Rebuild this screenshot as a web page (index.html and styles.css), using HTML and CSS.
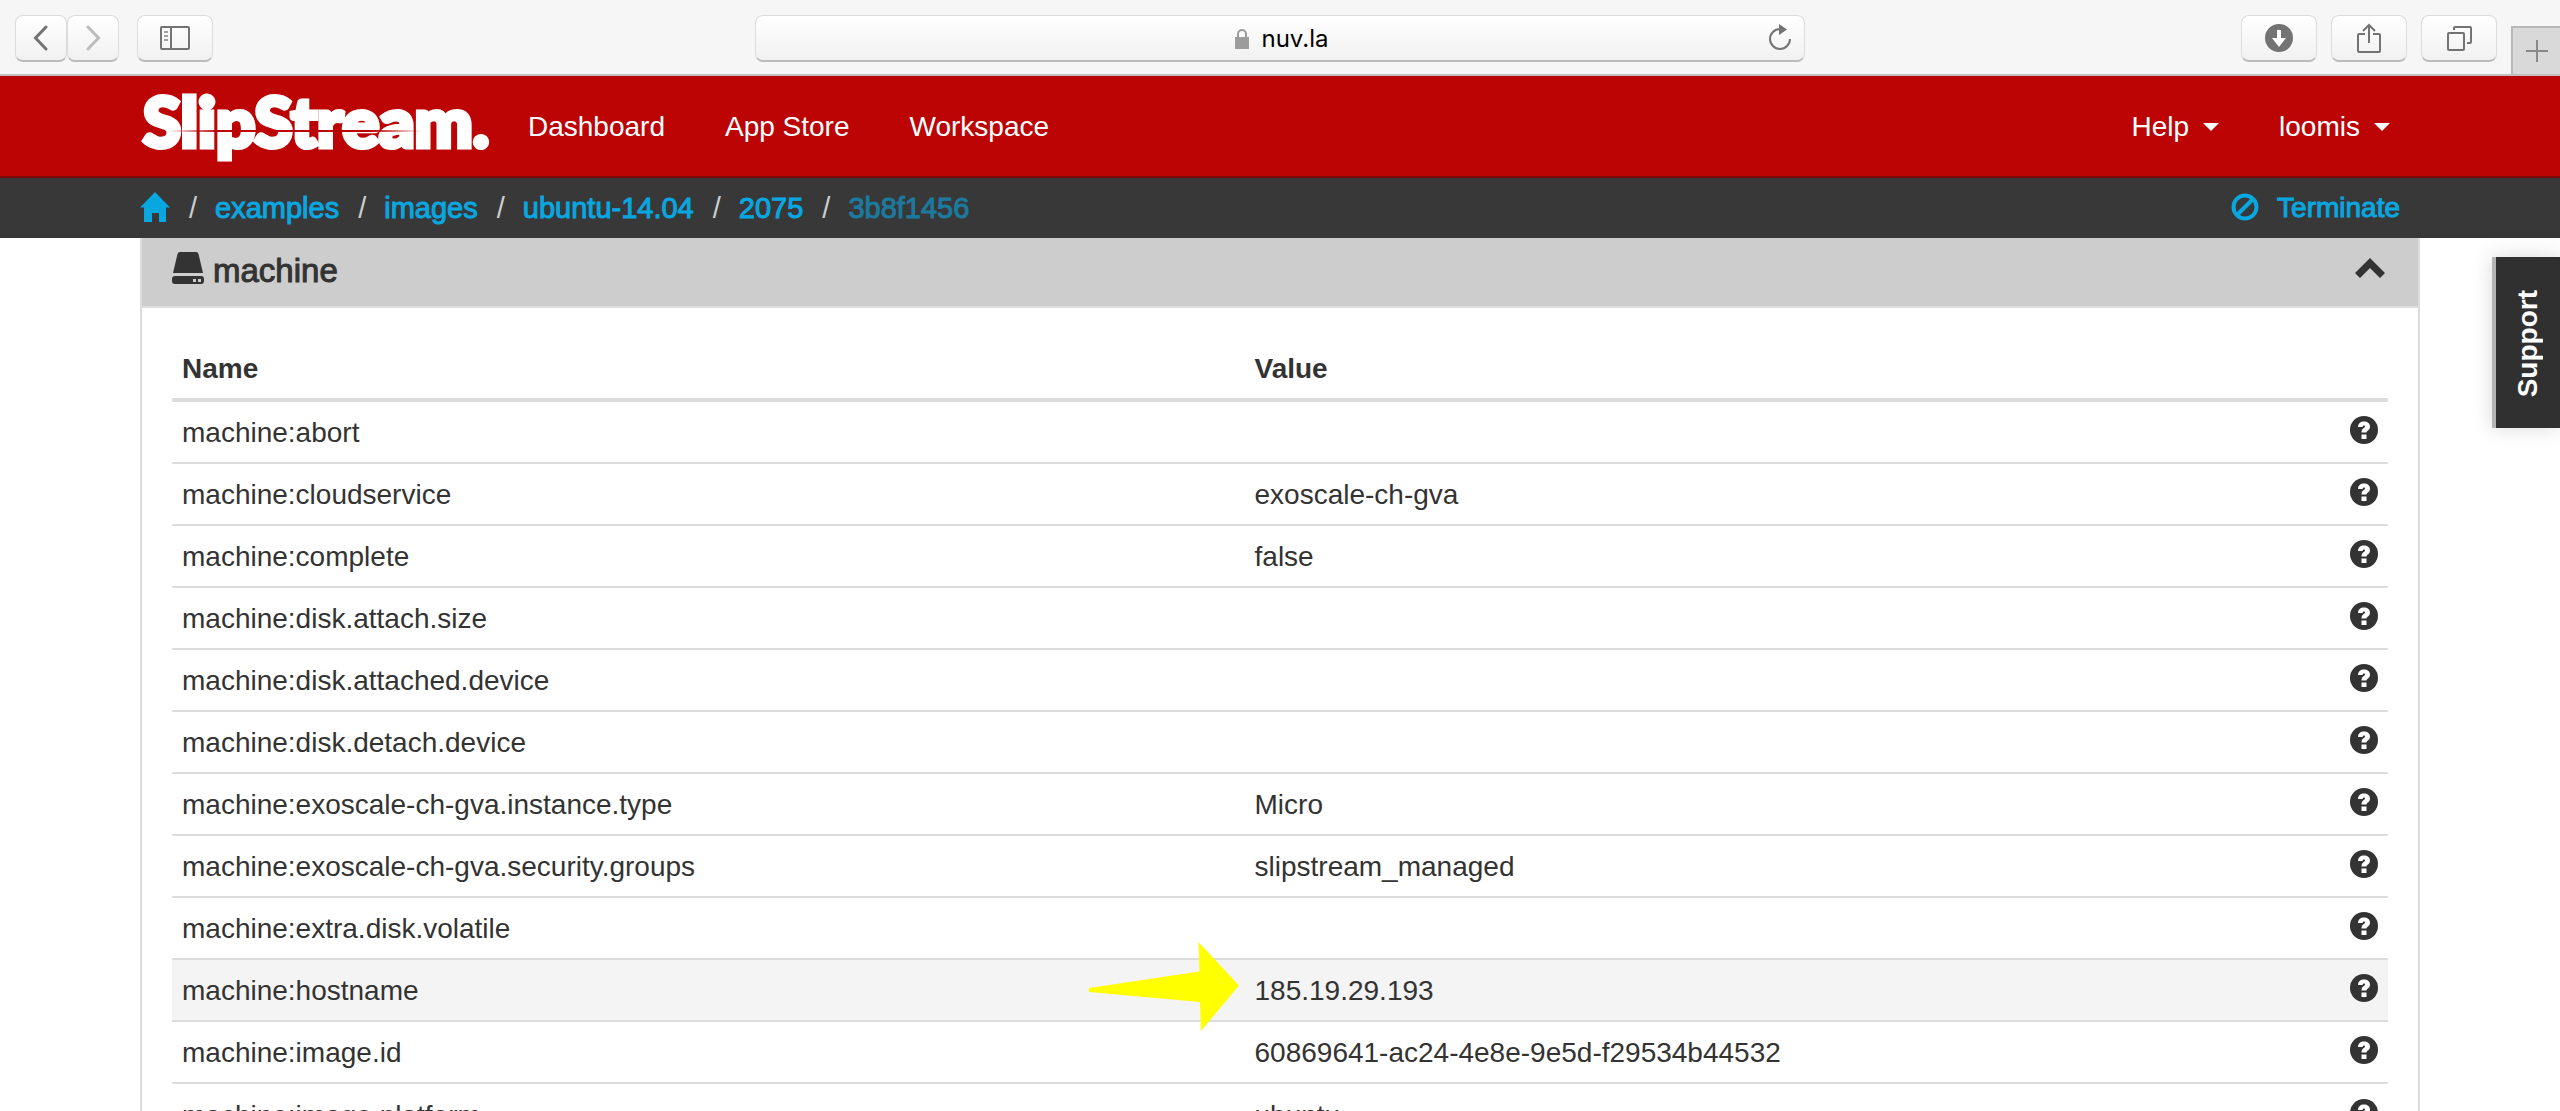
FILE: index.html
```html
<!DOCTYPE html>
<html lang="en">
<head>
<meta charset="utf-8">
<title>SlipStream</title>
<link rel="stylesheet" href="styles.css">
</head>
<body>
<svg width="0" height="0" class="defs" aria-hidden="true">
  <symbol id="help" viewBox="0 0 28 28"><circle cx="14" cy="14" r="14" fill="#333"/><path d="M8 11C8 7.500 10.500 5.500 14 5.500s6 2 6 5c0 2.500-1.300 3.600-2.700 4.600-.6.400-.8.800-.8 1.400H11.500c0-2.500.8-3.500 2.300-4.500.8-.5 1.200-.9 1.200-1.500 0-.5-.4-.9-1-.9-.8 0-1.200.5-1.300 1.400zM11.500 18.500h5V23h-5z" fill="#fff"/></symbol>
</svg>
<header class="browser">
  <div class="browser-left">
    <div class="history">
      <button class="tool tool-nav" aria-label="Back"><svg width="16" height="26" viewBox="0 0 16 26"><path d="M13 2 2.500 13 13 24" fill="none" stroke="#737373" stroke-width="3" stroke-linecap="round"/></svg></button>
      <button class="tool tool-nav" aria-label="Forward"><svg width="16" height="26" viewBox="0 0 16 26"><path d="M3 2 13.500 13 3 24" fill="none" stroke="#bdbdbd" stroke-width="3" stroke-linecap="round"/></svg></button>
    </div>
    <button class="tool" aria-label="Sidebar"><svg width="30" height="26" viewBox="0 0 30 26"><g fill="none" stroke="#737373" stroke-width="2"><rect x="1" y="2" width="28" height="22" rx="1"/><path d="M11 2v22"/></g><path d="M4 7h4M4 11h4M4 15h4" stroke="#a0a0a0" stroke-width="2"/></svg></button>
  </div>
  <div class="address">
    <svg width="14" height="22" viewBox="0 0 14 22"><path d="M3 10V6a4 4 0 0 1 8 0v4" fill="none" stroke="#9c9c9c" stroke-width="2"/><path d="M0 9h14v12H0z" fill="#9c9c9c"/></svg>
    <span>nuv.la</span>
    <button class="reload" aria-label="Reload"><svg width="24" height="28" viewBox="0 0 24 28"><path d="M12 6A10 10 0 1 0 22 16" fill="none" stroke="#737373" stroke-width="2"/><path d="M11 1l8 5.500-8 5.500z" fill="#737373"/></svg></button>
  </div>
  <div class="browser-right">
    <button class="tool" aria-label="Downloads"><svg width="28" height="28" viewBox="0 0 28 28"><circle cx="14" cy="14" r="14" fill="#737373"/><path d="M12 6h4v8h5l-7 9-7-9h5z" fill="#fff"/></svg></button>
    <button class="tool" aria-label="Share"><svg width="24" height="32" viewBox="0 0 24 32"><g fill="none" stroke="#737373" stroke-width="2"><path d="M8 12H2q-1 0-1 1v16q0 1 1 1h20q1 0 1-1V13q0-1-1-1h-6M12 21V3M6 9l6-6 6 6"/></g></svg></button>
    <button class="tool" aria-label="Tabs"><svg width="26" height="26" viewBox="0 0 26 26"><g fill="none" stroke="#737373" stroke-width="2"><rect x="2" y="8" width="16" height="17" rx="1"/><path d="M8 5V3q0-1 1-1h15q1 0 1 1v14q0 1-1 1h-3"/></g></svg></button>
    <button class="new-tab" aria-label="New tab"><svg width="22" height="22" viewBox="0 0 22 22"><path d="M11 0v22M0 11h22" stroke="#8a8a8a" stroke-width="2"/></svg></button>
  </div>
</header>

<nav class="navbar">
  <div class="container">
    <a class="logo" href="#">SlipStream.</a>
    <div class="menu">
      <a href="#">Dashboard</a>
      <a href="#">App Store</a>
      <a href="#">Workspace</a>
    </div>
    <div class="menu menu-right">
      <a href="#">Help<span class="caret"></span></a>
      <a href="#">loomis<span class="caret"></span></a>
    </div>
  </div>
</nav>

<div class="crumbbar">
  <div class="container">
    <ol class="crumbs">
      <li><a href="#" aria-label="Home"><svg width="30" height="30" viewBox="0 0 30 30"><path d="M15 0 30 15.500h-4V30h-7v-9h-7v9H4V15.500H0z" fill="#08a7e0"/></svg></a></li>
      <li><a href="#">examples</a></li>
      <li><a href="#">images</a></li>
      <li><a href="#">ubuntu-14.04</a></li>
      <li><a href="#">2075</a></li>
      <li><a class="current" href="#">3b8f1456</a></li>
    </ol>
    <a class="terminate" href="#"><svg width="28" height="28" viewBox="0 0 28 28"><g fill="none" stroke="#08a7e0" stroke-width="4"><circle cx="14" cy="14" r="11.500"/><path d="M22 6 6 22"/></g></svg><span>Terminate</span></a>
  </div>
</div>

<main class="panel">
  <h2 class="panel-head">
    <svg width="32" height="32" viewBox="0 0 32 32"><path d="M8 0h16q2 0 2.500 2L31 21H1L5.500 2Q6 0 8 0z" fill="#333"/><path fill-rule="evenodd" d="M3 24h26q3 0 3 3v2q0 3-3 3H3q-3 0-3-3v-2q0-3 3-3zm18 3v3h3v-3zm5 0v3h3v-3z" fill="#333"/></svg>
    <span>machine</span>
    <button class="collapse" aria-label="Collapse"><svg width="30" height="20" viewBox="0 0 30 20"><path d="M15 0 30 15l-5 5-10-10L5 20l-5-5z" fill="#333"/></svg></button>
  </h2>
  <div class="panel-body">
    <table>
      <thead>
        <tr><th class="name">Name</th><th>Value</th><th class="help"></th></tr>
      </thead>
      <tbody>
        <tr><td>machine:abort</td><td></td><td><svg class="tip"><use href="#help"/></svg></td></tr>
        <tr><td>machine:cloudservice</td><td>exoscale-ch-gva</td><td><svg class="tip"><use href="#help"/></svg></td></tr>
        <tr><td>machine:complete</td><td>false</td><td><svg class="tip"><use href="#help"/></svg></td></tr>
        <tr><td>machine:disk.attach.size</td><td></td><td><svg class="tip"><use href="#help"/></svg></td></tr>
        <tr><td>machine:disk.attached.device</td><td></td><td><svg class="tip"><use href="#help"/></svg></td></tr>
        <tr><td>machine:disk.detach.device</td><td></td><td><svg class="tip"><use href="#help"/></svg></td></tr>
        <tr><td>machine:exoscale-ch-gva.instance.type</td><td>Micro</td><td><svg class="tip"><use href="#help"/></svg></td></tr>
        <tr><td>machine:exoscale-ch-gva.security.groups</td><td>slipstream_managed</td><td><svg class="tip"><use href="#help"/></svg></td></tr>
        <tr><td>machine:extra.disk.volatile</td><td></td><td><svg class="tip"><use href="#help"/></svg></td></tr>
        <tr class="hover"><td>machine:hostname</td><td class="pointed"><svg class="arrow" width="150" height="90" viewBox="0 0 150 90"><path d="M0 46 110.500 29.500 109.500 0 150 43.500 112 89 111 60 0 50z" fill="#ff0"/></svg>185.19.29.193</td><td><svg class="tip"><use href="#help"/></svg></td></tr>
        <tr><td>machine:image.id</td><td>60869641-ac24-4e8e-9e5d-f29534b44532</td><td><svg class="tip"><use href="#help"/></svg></td></tr>
        <tr><td>machine:image.platform</td><td>ubuntu</td><td><svg class="tip"><use href="#help"/></svg></td></tr>
      </tbody>
    </table>
  </div>
</main>
<button class="support"><span>Support</span></button>
</body>
</html>
```
FILE: styles.css
```css
* { box-sizing: border-box; }
body {
  margin: 0;
  background: #fff;
  color: #333;
  font: 28px/40px "Liberation Sans", Arial, sans-serif;
  overflow: hidden;
  height: 100vh;
}
button { font: inherit; padding: 0; border: 0; background: none; }
a { text-decoration: none; color: inherit; }
svg { display: block; flex: none; }
.defs { position: absolute; }

/* browser toolbar */
.browser {
  display: grid;
  grid-template-columns: 1fr 41% 1fr;
  height: 76px;
  background: #f6f6f6;
  border-bottom: 2px solid #c0c0c0;
}
.browser-left, .browser-right { display: flex; align-items: flex-start; padding-top: 15px; }
.browser-left { gap: 18px; padding-left: 15px; }
.browser-right { gap: 14px; justify-content: flex-end; }
.history { display: flex; }
.tool, .address {
  display: flex;
  align-items: center;
  justify-content: center;
  height: 47px;
  border: 1px solid #dcdcdc;
  border-bottom: 2px solid #bcbcbc;
  border-radius: 8px;
  background: linear-gradient(#fff, #f1f1f1);
}
.tool { width: 76px; }
.tool-nav { width: 52px; }
.address {
  position: relative;
  margin-top: 15px;
  padding-top: 2px;
  padding-left: 4px;
  gap: 12px;
  color: #000;
  font: 24px/40px "Inter", sans-serif;
}
.reload { position: absolute; right: 12px; top: 7px; }
.new-tab {
  display: flex;
  align-items: center;
  justify-content: center;
  width: 49px;
  height: 48px;
  margin-top: 11px;
  background: #d9d9d9;
  border: solid #b8b8b8;
  border-width: 2px 0 0 2px;
}

/* application bar */
.container { display: flex; align-items: center; width: 100%; height: 100%; padding: 0 140px; }
.navbar { height: 102px; background: #bc0405; border-bottom: 2px solid #7c0a0c; color: #fff; }
.logo {
  position: relative;
  width: 346px;
  padding-left: 3px;
  padding-bottom: 10px;
  font: 900 69px/80px Lato, sans-serif;
  -webkit-text-stroke: 5px #fff;
}
.logo::after {
  content: "";
  position: absolute;
  left: 28px;
  right: 64px;
  top: 49px;
  height: 2px;
  background: linear-gradient(90deg, transparent, #bc0405 20%, #bc0405 80%, transparent);
}
.menu { display: flex; gap: 60px; margin-left: 42px; padding-top: 2px; }
.menu-right { margin: 0 30px 0 auto; }
.menu a { display: flex; align-items: center; }
.caret { margin-left: 14px; border: solid transparent; border-width: 8px 8px 0; border-top-color: #fff; }

/* breadcrumb bar */
.crumbbar { height: 60px; background: #383838; color: #08a7e0; }
.crumbs { display: flex; align-items: center; margin: 0; padding: 0; list-style: none; font-size: 29px; }
.crumbs li { display: flex; align-items: center; }
.crumbs li + li::before { content: "/"; padding: 0 18px 0 19px; color: #ccc; }
.crumbs svg { margin-bottom: 3px; }
.current { color: #1c7a9f; }
.terminate { display: flex; align-items: center; gap: 18px; margin: 0 20px 0 auto; }
.terminate svg { margin-bottom: 3px; }
.terminate span, .crumbs a { -webkit-text-stroke: 1px; }

/* parameters panel */
.panel { margin: 0 140px; border: solid #ddd; border-width: 0 2px; }
.panel-head {
  display: flex;
  align-items: center;
  gap: 9px;
  height: 70px;
  margin: 0;
  padding: 0 33px 8px 30px;
  background: #cdcdcd;
  border-bottom: 2px solid #ddd;
  font-size: 33px;
  font-weight: 500;
}
.panel-head span { padding-top: 6px; -webkit-text-stroke: 1px; }
.collapse { margin-left: auto; }
.panel-body { padding: 30px; }
table { width: 100%; border-collapse: collapse; table-layout: fixed; }
th, td { padding: 11px 10px 9px; height: 62px; text-align: left; border-top: 2px solid #ddd; }
th { border-top: 0; font-weight: bold; }
thead tr { border-bottom: 4px solid #ddd; }
.name { width: 48.4%; }
.help { width: 48px; }
.hover { background: #f4f4f4; }
.tip { width: 28px; height: 28px; margin-bottom: 6px; }
.pointed { position: relative; }
.arrow { position: absolute; left: -156px; top: -18px; }

/* support tab */
.support {
  position: absolute;
  right: 0;
  top: 257px;
  width: 68px;
  height: 171px;
  padding-top: 14px;
  border-left: 4px solid #b4b4b4;
  background: #303030;
  color: #fff;
  font-weight: bold;
  box-shadow: 0 0 20px rgba(0, 0, 0, .15);
}
.support span { display: inline-block; writing-mode: vertical-rl; transform: rotate(180deg); }
```
